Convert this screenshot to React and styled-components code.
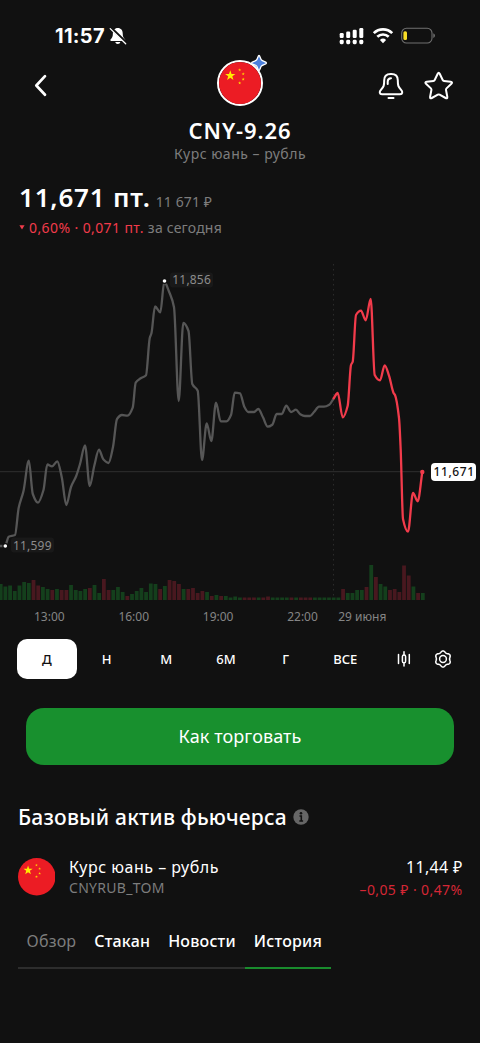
import { useState } from "react";
import styled, { createGlobalStyle } from "styled-components";

const STEP = 4.69;

const previousDay = [
	[0, 546], [5, 546], [8.7, 536.7], [15, 535], [18.7, 507.7], [23.5, 491], [28.8, 460.7], [32.8, 494], [38, 502.7],
	[43.5, 490], [47.3, 464.5], [52, 466.3], [57.3, 461.3], [61.8, 477.5], [66.3, 505], [71, 487], [76, 476.5],
	[80, 464], [85, 445.3], [89.7, 486], [94.3, 465.7], [99, 449.7], [103.3, 459.3], [108.5, 463], [113, 447],
	[117, 419], [122, 415], [127.5, 415.7], [132.7, 407.7], [135.7, 382.7], [140.7, 378.3], [146, 375.3],
	[149.7, 338.3], [151.5, 333], [155, 306.5], [160.3, 312.3], [164.3, 282], [169, 291.5], [174, 307.3],
	[178.7, 401], [183.3, 323], [188.5, 331], [192.3, 384], [197.7, 390.7], [202, 460], [206.7, 423.3],
	[211.3, 441], [216, 402.7], [220.7, 421.3], [226.5, 421.3], [231, 415], [234.7, 392.7], [240, 393.3],
	[244.3, 406.7], [248.3, 412], [254, 412], [258.3, 409], [263, 417.3], [267.7, 426.7], [272.3, 424.7],
	[276.7, 414], [281.7, 414], [286.3, 405.7], [291, 412], [296, 409.7], [300, 414], [305, 416], [310, 416],
	[314, 412], [319, 406.7], [324, 406.7], [329.3, 404.7], [333.7, 398.3],
];

const today = [
	[333.7, 398.3], [337.7, 393], [342.7, 417.3], [347.7, 405.7], [351, 365], [352.7, 361.7], [356, 315],
	[361, 310.7], [365.7, 320.3], [370.7, 299], [374.7, 375], [380, 380.3], [384.7, 365.3], [389, 375.7],
	[393.7, 393.3], [395, 395], [399, 418], [400.7, 450], [403, 519], [408, 531.7], [413, 493], [417.7, 501.3],
	[422.3, 472],
];

// positive = growth, negative = fall
const volumes = [
	16, 13.5, 14.5, 9, 14.5, 18, 17, -20, -14.5, 13, 11, -10, 11, -10, -10, 15, 10, 9, 11, -12, 15, 7, -21, -10, 10,
	13, 8, -4, 6, 9, 12, 8, 16.5, 16, -11, 14, -20, -19, -16, 11, -11, -12, -7, -9, 8, -4, 5, -4, 4, 2.5, 3.5, 2.5,
	-2.5, -2.5, -2.5, 2.5, -2.5, -3.5, 2.5, 2.5, 2.5, 2.5, -2.5, 2.5, -2.5, -2.5, -2.5, 2.5, 2.5, 2.5, 2.5, 2.5, 2.5,
	-11, 7, 7, 10, 10, -13, 35, -23, 16, 13.5, -10, -11, -8, -34.5, -24.5, 13.5, -7, 7,
];

const periods = ["Д", "Н", "М", "6М", "Г", "ВСЕ"];
const tabs = ["Обзор", "Стакан", "Новости", "История"];

// monotone cubic through all the points, so peaks never overshoot
const linePath = (points) => {
	const slopes = points.slice(1).map(([x, y], i) => (y - points[i][1]) / (x - points[i][0]));
	const tangents = points.map((_, i) => {
		const before = slopes[i - 1];
		const after = slopes[i];
		if (before === undefined) return after;
		if (after === undefined) return before;
		return before * after <= 0 ? 0 : (2 * before * after) / (before + after);
	});
	return points.slice(1).reduce((path, [x, y], i) => {
		const [px, py] = points[i];
		const d = (x - px) / 3;
		return `${path}C${px + d},${py + d * tangents[i]} ${x - d},${y - d * tangents[i + 1]} ${x},${y}`;
	}, `M${points[0]}`);
};

const starPoints = (cx, cy, r) =>
	Array.from({ length: 10 }, (_, i) => {
		const radius = i % 2 ? r * 0.4 : r;
		const angle = (Math.PI / 5) * i - Math.PI / 2;
		return `${cx + radius * Math.cos(angle)},${cy + radius * Math.sin(angle)}`;
	}).join(" ");

// six rounded teeth, the first one pointing up
const gearPoints = Array.from({ length: 72 }, (_, i) => {
	const angle = (Math.PI / 36) * i;
	const radius = 7.3 + 0.75 * Math.cos(6 * angle);
	return `${10 + radius * Math.sin(angle)},${10 - radius * Math.cos(angle)}`;
}).join(" ");

const Flag = ({ size }) => (
	<svg width={size} height={size} viewBox="0 0 38 38">
		<circle cx="19" cy="19" r="19" fill="#ec1c24" />
		<polygon points={starPoints(10.2, 12.4, 4.9)} fill="#ffed00" />
		<polygon points={starPoints(18.7, 7.2, 1.5)} fill="#ffd500" />
		<polygon points={starPoints(21.9, 10.8, 1.5)} fill="#ffd500" />
		<polygon points={starPoints(21.9, 15.6, 1.5)} fill="#ffd500" />
		<polygon points={starPoints(18.7, 19, 1.5)} fill="#ffd500" />
	</svg>
);

const MutedBell = () => (
	<svg width="18" height="18" viewBox="0 0 18 18">
		<path
			d="M8.8 1c-3.2 0-4.9 2.3-4.9 5.3 0 3.6-.8 4.7-2.2 6-.5.5-.6 1.7.5 1.7h13.2c1.1 0 1-1.2.5-1.7-1.4-1.3-2.2-2.4-2.2-6C13.7 3.3 12 1 8.8 1zM6.3 15.1h5c-.2 1.2-1.2 2-2.5 2s-2.3-.8-2.5-2z"
			fill="#fff"
		/>
		<path d="M2.4 1.2l15 14.6" stroke="#111" strokeWidth="2.6" />
		<path d="M1.2 1.6l15.5 15.2" stroke="#fff" strokeWidth="1.3" strokeLinecap="round" />
	</svg>
);

const Signal = () => (
	<svg width="26" height="18" viewBox="0 0 26 18" fill="#fff">
		<rect x="0.7" y="6" width="4" height="5" rx="1.2" />
		<rect x="7.2" y="4.5" width="4" height="6.5" rx="1.2" />
		<rect x="13.7" y="2.7" width="4" height="8.3" rx="1.2" />
		<rect x="20.3" y="1" width="4" height="10" rx="1.2" />
		<rect x="0.7" y="12.8" width="4" height="4.4" rx="1.4" />
		<rect x="7.2" y="12.8" width="4" height="4.4" rx="1.4" />
		<rect x="13.7" y="12.8" width="4" height="4.4" rx="1.4" />
		<rect x="20.3" y="12.8" width="4" height="4.4" rx="1.4" />
	</svg>
);

const Wifi = () => (
	<svg width="22" height="18" viewBox="0 0 22 18" fill="none" stroke="#fff" strokeWidth="2.7">
		<path d="M1.8 6.1a13.2 13.2 0 0 1 18.4 0" />
		<path d="M5.3 9.8a8.2 8.2 0 0 1 11.4 0" />
		<path d="M11 16.2l-3.1-3.2a4.5 4.5 0 0 1 6.2 0z" fill="#fff" stroke="none" />
	</svg>
);

const Battery = () => (
	<svg width="36" height="18" viewBox="0 0 36 18">
		<rect x="0.7" y="1.2" width="30.3" height="14.8" rx="4.8" fill="none" stroke="#717171" strokeWidth="1.1" />
		<rect x="2.4" y="4.3" width="3.6" height="8.7" rx="1.5" fill="#f8dc26" />
		<path d="M32.3 6.2q1.7.7 1.7 2.4t-1.7 2.4z" fill="#717171" />
	</svg>
);

const AlertBell = () => (
	<svg width="28" height="30" viewBox="0 0 28 30" fill="none" stroke="#fff" strokeWidth="2" strokeLinejoin="round">
		<path d="M13.7 3h.6c4.7 0 6.5 2.4 6.5 6.3 0 5.2.4 6.700 3.200 9.400 2 2 1.600 4.500-1 4.500H5c-2.600 0-3-2.500-1-4.500 2.800-2.700 3.200-4.200 3.200-9.400C7.200 5.400 9 3 13.700 3z" />
		<path d="M10.7 13v-2.300c0-2.300 1-3.500 3.300-3.500M11.500 27h5" strokeLinecap="round" />
	</svg>
);

const Favourite = () => (
	<svg width="30" height="30" viewBox="0 0 30 30" fill="none" stroke="#fff" strokeWidth="2" strokeLinejoin="round">
		<path d="M13.7 2.7q1-2.1 2 0l3 6.300q.4.8 1.300.9l6.700.9q2.300.4.7 1.900l-4.900 4.700q-.7.7-.5 1.600l1.300 6.800q.3 2.200-1.700 1.200l-6-3.300q-.9-.5-1.800 0l-6 3.300q-2 1-1.700-1.200l1.300-6.800q.2-.9-.5-1.600L2 12.700q-1.600-1.500.7-1.900l6.700-.9q.9-.1 1.300-.9z" />
	</svg>
);

const Candles = () => (
	<svg width="16" height="18" viewBox="0 0 16 18" fill="none" stroke="#fff" strokeWidth="1.5" strokeLinecap="round">
		<path d="M2.5 4.4v9M13.3 4.4v9M8 1.8v3M8 13v3" />
		<rect x="6.4" y="5" width="3.2" height="7.8" rx="1.6" />
	</svg>
);

const Gear = () => (
	<svg width="20" height="20" viewBox="0 0 20 20" fill="none" stroke="#fff" strokeWidth="1.5" strokeLinejoin="round">
		<polygon points={gearPoints} />
		<circle cx="10" cy="10" r="3.4" />
	</svg>
);

const PriceChart = () => (
	<ChartSvg viewBox="0 256 480 350">
		<path d="M333.5 264V600" stroke="#2b2b2b" strokeDasharray="1.5 3.5" />
		<path d="M0 471.7H422" stroke="#292929" strokeWidth="1.2" />
		{volumes.map((volume, index) => (
			<rect
				key={index}
				x={0.7 + index * STEP - 1.9}
				y={600 - Math.abs(volume)}
				width="3.8"
				height={Math.abs(volume)}
				fill={volume > 0 ? "#143f1c" : "#48181f"}
			/>
		))}
		<Line d={linePath(previousDay)} stroke="#565656" />
		<Line d={linePath(today)} stroke="#f23b4b" />
		<circle cx="164.5" cy="281" r="3" fill="#111" />
		<circle cx="164.5" cy="281" r="1.8" fill="#fff" />
		<circle cx="5.3" cy="546" r="3" fill="#111" />
		<circle cx="5.3" cy="546" r="1.8" fill="#fff" />
		<circle cx="422.3" cy="472" r="2.2" fill="#f23b4b" />
		<rect x="170" y="272.5" width="43" height="15" rx="3" fill="#191919" />
		<ChartText x="172.3" y="284.3" textLength="38.5">11,856</ChartText>
		<rect x="11" y="537.5" width="43" height="15" rx="3" fill="#191919" />
		<ChartText x="13" y="549.5" textLength="38.5">11,599</ChartText>
		<rect x="431" y="463" width="45" height="18" rx="4" fill="#fff" />
		<ChartText x="433.5" y="476.2" textLength="40.5" $current>11,671</ChartText>
	</ChartSvg>
);

const App = () => {
	const [period, setPeriod] = useState("Д");
	const [activeTab, setActiveTab] = useState("История");

	return (
		<Screen>
			<GlobalStyle />
			<StatusBar>
				<Clock>11:57</Clock>
				<MutedBell />
				<StatusIcons>
					<Signal />
					<Wifi />
					<Battery />
				</StatusIcons>
			</StatusBar>

			<Header>
				<IconButton>
					<svg width="16" height="24" viewBox="0 0 16 24" fill="none" stroke="#fff" strokeWidth="2.7" strokeLinecap="round" strokeLinejoin="round">
						<path d="M13 2.2L4.3 11.500l8.700 9.200" />
					</svg>
				</IconButton>
				<Avatar>
					<Flag size={42} />
					<Spark width="18" height="18" viewBox="0 0 18 18">
						<path
							d="M9 1.5c1 0 1.300 3.200 2.500 4.600 1.400 1.200 5 1.700 5 2.900s-3.600 1.700-5 2.900c-1.200 1.400-1.500 4.600-2.500 4.600s-1.300-3.200-2.500-4.600C5.100 10.700 1.500 10.200 1.500 9s3.600-1.700 5-2.900C7.700 4.700 8 1.500 9 1.500z"
							fill="#4c80dc"
							stroke="#fff"
							strokeWidth="1.3"
						/>
					</Spark>
				</Avatar>
				<Actions>
					<AlertBell />
					<Favourite />
				</Actions>
			</Header>

			<Ticker>CNY-9.26</Ticker>
			<Subtitle>Курс юань – рубль</Subtitle>

			<PriceRow>
				<Price>11,671 пт.</Price>
				<RublePrice>11 671 ₽</RublePrice>
			</PriceRow>
			<ChangeRow>
				<svg width="6" height="5" viewBox="0 0 6 5">
					<path d="M.4.3h5.2L3 4.5z" fill="#f23b4b" />
				</svg>
				<Change>0,60% · 0,071 пт.</Change>
				<span>за сегодня</span>
			</ChangeRow>

			<PriceChart />
			<TimeAxis>
				<span>13:00</span>
				<span>16:00</span>
				<span>19:00</span>
				<span>22:00</span>
				<span>29 июня</span>
			</TimeAxis>

			<Periods>
				{periods.map((name) => (
					<Period key={name} $active={name === period} onClick={() => setPeriod(name)}>
						{name}
					</Period>
				))}
				<ChartTools>
					<Candles />
					<Gear />
				</ChartTools>
			</Periods>

			<TradeButton>Как торговать</TradeButton>

			<SectionTitle>
				Базовый актив фьючерса
				<svg width="16" height="16" viewBox="0 0 16 16">
					<circle cx="8" cy="8" r="7.7" fill="#666" />
					<circle cx="8" cy="4.2" r="1.3" fill="#111" />
					<path d="M6.5 7h1.8v5M6.3 12h3.8" fill="none" stroke="#111" strokeWidth="1.6" />
				</svg>
			</SectionTitle>

			<Asset>
				<Flag size={37.5} />
				<AssetColumn>
					<AssetName>Курс юань – рубль</AssetName>
					<AssetCode>CNYRUB_TOM</AssetCode>
				</AssetColumn>
				<AssetColumn $end>
					<AssetPrice>11,44 ₽</AssetPrice>
					<AssetChange>–0,05 ₽ · 0,47%</AssetChange>
				</AssetColumn>
			</Asset>

			<Tabs>
				{tabs.map((name) => (
					<Tab key={name} $muted={name === "Обзор"} $active={name === activeTab} onClick={() => setActiveTab(name)}>
						{name}
					</Tab>
				))}
			</Tabs>
		</Screen>
	);
};

const GlobalStyle = createGlobalStyle`
	* {
		box-sizing: border-box;
	}

	body {
		margin: 0;
		background: #111;
	}

	svg {
		display: block;
		flex-shrink: 0;
	}

	button {
		padding: 0;
		border: 0;
		background: none;
		color: inherit;
		font: inherit;
	}
`;

const Screen = styled.main`
	width: 480px;
	height: 1043px;
	overflow: hidden;
	background: #111;
	color: #fff;
	font-family: "Noto Sans", "Open Sans", sans-serif;
	white-space: nowrap;
`;

const StatusBar = styled.div`
	display: flex;
	align-items: center;
	height: 56px;
	padding: 15.5px 42.5px 0 55px;
`;

const Clock = styled.span`
	margin-right: 4px;
	font: 700 20px/20px Inter, sans-serif;
	letter-spacing: 0.3px;
`;

const StatusIcons = styled.div`
	display: flex;
	align-items: center;
	gap: 7px;
	margin-left: auto;
	margin-right: 0.5px;
`;

const Header = styled.header`
	display: grid;
	grid-template-columns: 1fr 46px 1fr;
	align-items: center;
	height: 60px;
	padding: 0 26px 7px;
`;

const IconButton = styled.button`
	justify-self: start;
	padding: 6px 0 0 6px;
`;

const Avatar = styled.div`
	position: relative;
	width: 46px;
	height: 46px;
	border: 2px solid #fff;
	border-radius: 50%;
`;

const Spark = styled.svg`
	position: absolute;
	top: -7.5px;
	right: -7px;
`;

const Actions = styled.div`
	display: flex;
	justify-self: end;
	gap: 19px;
	padding-top: 7px;
`;

const Ticker = styled.h1`
	margin: 0;
	font-size: 22px;
	font-weight: 600;
	line-height: 28px;
	letter-spacing: 0.9px;
	text-align: center;
`;

const Subtitle = styled.p`
	margin: 1px 0 0;
	color: #7d7d7d;
	font-size: 14px;
	line-height: 18px;
	letter-spacing: 0.5px;
	text-align: center;
`;

const PriceRow = styled.div`
	display: flex;
	align-items: baseline;
	gap: 5px;
	margin-top: 17px;
	padding-left: 19px;
`;

const Price = styled.strong`
	font-size: 26px;
	font-weight: 600;
	line-height: 34px;
	letter-spacing: 0.8px;
`;

const RublePrice = styled.span`
	color: #7d7d7d;
	font-size: 14px;
	letter-spacing: 0.1px;
`;

const ChangeRow = styled.div`
	display: flex;
	align-items: center;
	gap: 4px;
	height: 20px;
	margin-top: 3px;
	padding-left: 19px;
	color: #7d7d7d;
	font-size: 14px;
	letter-spacing: 0.2px;
`;

const Change = styled.span`
	color: #f23b4b;
	letter-spacing: 0.4px;
`;

const ChartSvg = styled.svg`
	width: 480px;
	height: 350px;
	margin-top: 19px;
`;

const Line = styled.path`
	fill: none;
	stroke-width: 2.3px;
	stroke-linejoin: round;
	stroke-linecap: round;
`;

const ChartText = styled.text`
	fill: ${(props) => (props.$current ? "#111" : "#8c8c8c")};
	font-size: 12px;
	font-weight: ${(props) => (props.$current ? 500 : 400)};
`;

const TimeAxis = styled.div`
	display: grid;
	grid-template-columns: 84.4px 84.4px 84.4px 51px auto;
	height: 20px;
	padding-left: 34px;
	color: #858585;
	font-size: 12px;
	line-height: 21px;
`;

const Periods = styled.div`
	display: flex;
	align-items: center;
	height: 40px;
	margin-top: 13px;
	padding-left: 17px;
`;

const Period = styled.button`
	width: 59.7px;
	height: 39.5px;
	border-radius: 10px;
	background: ${(props) => (props.$active ? "#fff" : "transparent")};
	color: ${(props) => (props.$active ? "#111" : "#fff")};
	font-size: 13px;
	font-weight: 500;
`;

const ChartTools = styled.div`
	display: flex;
	align-items: center;
	gap: 21.5px;
	padding-left: 20.5px;
`;

const TradeButton = styled.button`
	display: block;
	width: 428px;
	height: 57px;
	margin: 29px 0 0 26px;
	padding-bottom: 1px;
	border-radius: 18px;
	background: #18902e;
	font-size: 18px;
	letter-spacing: 0.1px;
`;

const SectionTitle = styled.h2`
	display: flex;
	align-items: center;
	gap: 6px;
	height: 30px;
	margin: 37px 0 0 18px;
	font-size: 21px;
	font-weight: 500;
	letter-spacing: 0.2px;
`;

const Asset = styled.div`
	display: flex;
	align-items: center;
	margin-top: 24px;
	padding: 0 17.5px;
`;

const AssetColumn = styled.div`
	display: flex;
	flex-direction: column;
	align-items: ${(props) => (props.$end ? "flex-end" : "flex-start")};
	margin-left: ${(props) => (props.$end ? "auto" : "14px")};
`;

const AssetName = styled.span`
	font-size: 16px;
	line-height: 22px;
	letter-spacing: 0.5px;
`;

const AssetCode = styled.span`
	color: #7d7d7d;
	font-size: 14px;
	line-height: 20px;
	letter-spacing: 0.3px;
`;

const AssetPrice = styled(AssetName)`
	letter-spacing: 0.3px;
`;

const AssetChange = styled(AssetCode)`
	padding-top: 2px;
	margin-bottom: -2px;
	color: #d52735;
	letter-spacing: 0.4px;
`;

const Tabs = styled.nav`
	display: inline-flex;
	margin: 28.5px 0 0 17.5px;
	border-bottom: 2px solid #2d2d2d;
`;

const Tab = styled.button`
	height: 42px;
	margin-bottom: -2px;
	padding: 0 9px 12px;
	border-bottom: 2px solid ${(props) => (props.$active ? "#198c2d" : "transparent")};
	color: ${(props) => (props.$muted ? "#7d7d7d" : "#fff")};
	font-size: 16px;
	font-weight: ${(props) => (props.$muted ? 400 : 500)};
	letter-spacing: 0.2px;
`;

export default App;
